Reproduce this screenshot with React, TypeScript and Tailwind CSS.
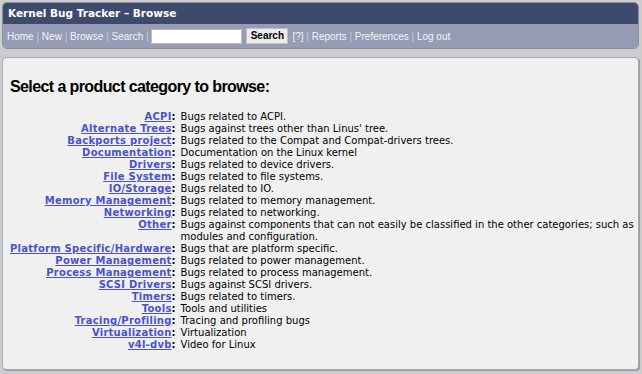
import React from "react";

const rows: [string, string][] = [
  ["ACPI", "Bugs related to ACPI."],
  ["Alternate Trees", "Bugs against trees other than Linus' tree."],
  ["Backports project", "Bugs related to the Compat and Compat-drivers trees."],
  ["Documentation", "Documentation on the Linux kernel"],
  ["Drivers", "Bugs related to device drivers."],
  ["File System", "Bugs related to file systems."],
  ["IO/Storage", "Bugs related to IO."],
  ["Memory Management", "Bugs related to memory management."],
  ["Networking", "Bugs related to networking."],
  ["Other", "Bugs against components that can not easily be classified in the other categories; such as modules and configuration."],
  ["Platform Specific/Hardware", "Bugs that are platform specific."],
  ["Power Management", "Bugs related to power management."],
  ["Process Management", "Bugs related to process management."],
  ["SCSI Drivers", "Bugs against SCSI drivers."],
  ["Timers", "Bugs related to timers."],
  ["Tools", "Tools and utilities"],
  ["Tracing/Profiling", "Tracing and profiling bugs"],
  ["Virtualization", "Virtualization"],
  ["v4l-dvb", "Video for Linux"],
];

const navLeft = ["Home", "New", "Browse", "Search"];
const navRight = ["Reports", "Preferences", "Log out"];

export default function App() {
  return (
    <div className="w-[642px] h-[374px] bg-[#cccccc] pt-[2px] px-[2px] overflow-hidden">
      <div className="w-[637px] rounded-[5px] overflow-hidden border border-[#8890a4]">
        <div className="h-[21px] bg-[#3d4a6b] px-[5px] flex items-center text-white font-bold text-[10.5px] font-['DejaVu_Sans',sans-serif]">
          Kernel Bug Tracker – Browse
        </div>
        <div className="h-[24px] bg-[#959cb4] px-[4px] flex items-center text-[10px] font-['Liberation_Sans',Arial,sans-serif] text-[#f4f4fa] whitespace-pre">
          {navLeft.map((n) => (
            <React.Fragment key={n}>
              <span>{n}</span>
              <span className="text-[#c8ccd8]"> | </span>
            </React.Fragment>
          ))}
          <input className="w-[91px] h-[15px] bg-white border border-[#b8bccc] outline-none" />
          <button className="ml-[4px] h-[16px] w-[42px] bg-[#ececec] border border-[#c0c0c0] text-[10px] font-bold text-black font-['Liberation_Sans',Arial,sans-serif] leading-none">
            Search
          </button>
          <span className="ml-[4px]">[?]</span>
          {navRight.map((n) => (
            <React.Fragment key={n}>
              <span className="text-[#c8ccd8]"> | </span>
              <span>{n}</span>
            </React.Fragment>
          ))}
        </div>
      </div>
      <div className="mt-[8px] w-[637px] h-[313px] rounded-[4px] border border-[#a4abbb] bg-[#f0f0f0] shadow-[1px_1px_0_#9a9a9a] pl-[7px] pr-[3px] pt-[18px]">
        <h1 className="text-[16px] tracking-[-0.6px] font-bold font-['Liberation_Sans',Arial,sans-serif] text-black leading-[22px]">
          Select a product category to browse:
        </h1>
        <div className="mt-[13px] grid grid-cols-[auto_1fr] gap-x-[5px] text-[10px] leading-[12px] font-['DejaVu_Sans',Verdana,sans-serif] text-black">
          {rows.map(([k, v]) => (
            <React.Fragment key={k}>
              <div className="text-right font-bold whitespace-nowrap">
                <a href="#" className="text-[#4a52cc] underline tracking-[0.25px]">{k}</a>:
              </div>
              <div>{v}</div>
            </React.Fragment>
          ))}
        </div>
      </div>
    </div>
  );
}
